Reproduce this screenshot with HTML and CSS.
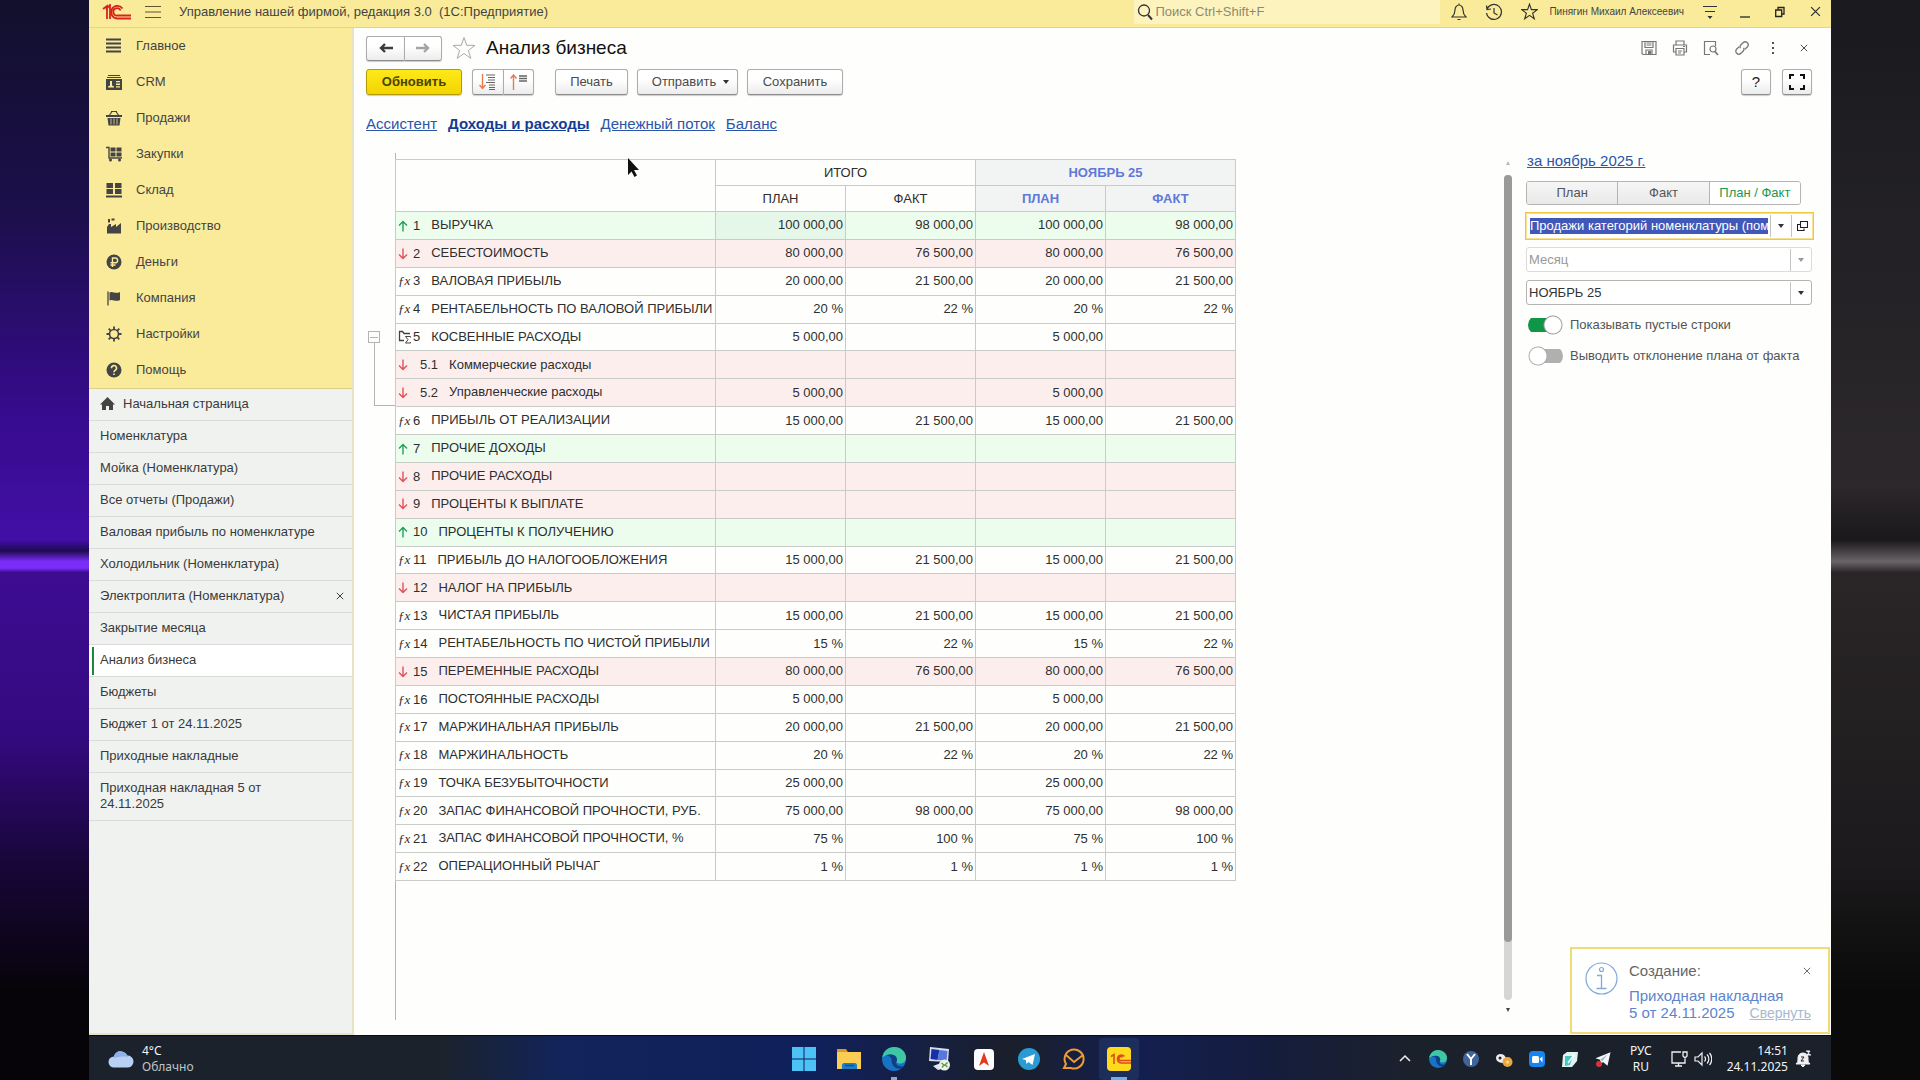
FILE: index.html
```html
<!DOCTYPE html>
<html lang="ru">
<head>
<meta charset="utf-8">
<title>Анализ бизнеса</title>
<link rel="stylesheet" href="styles.css">
</head>
<body>
<svg class="defs" aria-hidden="true">
  <symbol id="up" viewBox="0 0 10 12"><path d="M5 11.500V1.500M1 5.500L5 1.500l4 4" fill="none" stroke="#1fa05a" stroke-width="1.400"/></symbol>
  <symbol id="down" viewBox="0 0 10 12"><path d="M5 .5v10M1 6.500l4 4 4-4" fill="none" stroke="#e0525a" stroke-width="1.400"/></symbol>
  <symbol id="sum" viewBox="0 0 14 14"><path d="M6 10.500H1.500V1.500h3l1.500 2h6" fill="none" stroke="#444" stroke-width="1.300"/><path d="M12.500 7.500V6.500h-5l2.500 3.200L7.500 13h5v-1" fill="none" stroke="#444"/></symbol>
  <symbol id="star" viewBox="0 0 24 24"><path d="M12 1.500l2.700 7.800 8.300.1-6.600 5 2.400 7.900L12 17.500l-6.800 4.800 2.400-7.900-6.600-5 8.300-.1z" fill="none" stroke="currentColor"/></symbol>
  <symbol id="x" viewBox="0 0 10 10"><path d="M1 1l8 8M9 1L1 9" fill="none" stroke="currentColor" stroke-width="1.200"/></symbol>
  <symbol id="edge" viewBox="0 0 24 24"><circle cx="12" cy="12" r="12" fill="#1774c4"/><path d="M.3 10.500C1.500 4 6.500 0 12 0c7 0 12 5 12 10.500 0 4-3 6-6 6-2.500 0-4-1-3.500-2C16 12 14 7.500 9 7.500c-4 0-7 1.500-8.700 3z" fill="#3fc7a5"/><path d="M14.500 14.500C16 12 14 7.500 9 7.500c-2 0-4 .4-5.500 1 4-.5 6 2 6 5 0 5 4 8.500 9.500 8.500 1-.6 2.500-2 3-3-4.500 1.500-9-1-7.500-4.500z" fill="#0f3f86"/></symbol>
  <symbol id="plane" viewBox="0 0 24 24"><path d="M2 11L22 3l-4 18-6-5-3 3-1-6z" fill="#f4f7fb"/><path d="M8 13l10-7-7 9z" fill="#9eb6cc"/></symbol>
</svg>

<div class="window">
  <header class="titlebar">
    <svg class="logo" width="30" height="16" viewBox="0 0 30 16"><path d="M1 5l4-3v13M4 5.500L8 1v14" fill="none" stroke="#d8231c" stroke-width="1.800"/><path d="M20.500 4.500A6.300 6.300 0 1 0 15.500 14.500H29M18.500 6.500A3.700 3.700 0 1 0 15.500 11.500H29" fill="none" stroke="#d8231c" stroke-width="1.800"/></svg>
    <button class="bare menu" aria-label="Меню"><svg width="16" height="14" viewBox="0 0 16 14"><path d="M0 1.500h16M0 7h16M0 12.500h16" stroke="#5c5530" stroke-width="1.200"/></svg></button>
    <span class="apptitle">Управление нашей фирмой, редакция 3.0&nbsp; (1С:Предприятие)</span>
    <label class="search"><svg width="16" height="18" viewBox="0 0 16 18"><circle cx="7" cy="7.500" r="5.500" fill="none" stroke="#333" stroke-width="1.300"/><path d="M11 12l4 4.500" stroke="#333" stroke-width="2"/></svg><input type="search" placeholder="Поиск Ctrl+Shift+F" aria-label="Поиск"></label>
    <div class="titleicons">
      <button class="bare" aria-label="Уведомления"><svg width="16" height="18" viewBox="0 0 16 18"><path d="M1 14h14c-2-2-3-3-3-7 0-3-2-5-4-5S4 4 4 7c0 4-1 5-3 7zM6.500 16.500h3M8 .5V2" fill="none" stroke="#333" stroke-width="1.200"/></svg></button>
      <button class="bare" aria-label="История"><svg width="18" height="18" viewBox="0 0 18 18"><path d="M2 6a7.500 7.500 0 1 1-.5 4M1.500 2.500L2 6.500l4-.5M9 5v5l3.500 2" fill="none" stroke="#333" stroke-width="1.200"/></svg></button>
      <button class="bare" aria-label="Избранное"><svg width="17" height="17"><use href="#star" stroke-width="1.600"/></svg></button>
      <span class="user">Пинягин Михаил Алексеевич</span>
      <button class="bare" aria-label="Сервис"><svg width="16" height="16" viewBox="0 0 16 16"><path d="M1 2.500h14M3 7.500h10" stroke="#333" stroke-width="1.200"/><path d="M5.500 12h5L8 15z" fill="#333"/></svg></button>
      <button class="bare" aria-label="Свернуть"><svg width="12" height="12" viewBox="0 0 12 12"><path d="M1 11h10" stroke="#333" stroke-width="1.400"/></svg></button>
      <button class="bare" aria-label="Восстановить"><svg width="10" height="12" viewBox="0 0 10 12"><path d="M.7 4h6v6.500h-6zM3 4V1.500h6V8H7" fill="none" stroke="#222" stroke-width="1.300"/></svg></button>
      <button class="bare" aria-label="Закрыть"><svg width="11" height="11"><use href="#x"/></svg></button>
    </div>
  </header>

  <div class="body">
    <aside class="sidebar">
      <nav class="sections">
        <a href="#"><svg viewBox="0 0 16 16"><path d="M0 1.500h15M0 5.500h15M0 9.500h15M0 13.500h15" stroke="#444" stroke-width="1.800"/></svg>Главное</a>
        <a href="#"><svg viewBox="0 0 16 16"><path d="M2 1.500h12M1 3.500h14" stroke="#444"/><path fill-rule="evenodd" d="M0 5h16v11H0zM2 12.500v1h6v-1l-2-1V7H4v4.500zM10 7v1.300h4V7zm0 2.600v1.300h4V9.600zm0 2.600v1.300h4v-1.300z" fill="#444"/></svg>CRM</a>
        <a href="#"><svg viewBox="0 0 16 16"><path d="M3 6l3-4.500M13 6l-3-4.500M5 1.500h6" stroke="#444" stroke-width="1.200" fill="none"/><path d="M0 5h16v2H0zM1.500 8h13L13.500 15.500h-11z" fill="#444"/><path d="M5 8.500v6M8 8.500v6M11 8.500v6" stroke="#fbea9a" stroke-width=".7"/></svg>Продажи</a>
        <a href="#"><svg viewBox="0 0 16 16"><path d="M0 1.500h3v10.500h13" fill="none" stroke="#444" stroke-width="1.400"/><path d="M4.500 1.500h5v4h-5zM10.500 1.500h5v4h-5zM4.500 6.500h5v4h-5zM10.500 6.500h5v4h-5z" fill="#444"/><circle cx="4.500" cy="14" r="1.500" fill="#444"/><circle cx="13.500" cy="14" r="1.500" fill="#444"/></svg>Закупки</a>
        <a href="#"><svg viewBox="0 0 16 16"><path d="M.5 1h6.500v5H.5zM9 1h6.500v5H9zM.5 7h6.500v5H.5zM9 7h6.500v5H9zM0 13.500h16V15.500H0z" fill="#444"/></svg>Склад</a>
        <a href="#"><svg viewBox="0 0 16 16"><path d="M1 15.500V9l2-3h2v3l5-3v3l5-4v10.500zM2 1h2v3.500H2zM5.500.5h3v2h-3z" fill="#444"/></svg>Производство</a>
        <a href="#"><svg viewBox="0 0 16 16"><circle cx="8" cy="8" r="7.500" fill="#444"/><path d="M6.500 13V4h2.700a2.300 2.300 0 0 1 0 4.800H4.500M4.500 11h5" fill="none" stroke="#fbea9a" stroke-width="1.400"/></svg>Деньги</a>
        <a href="#"><svg viewBox="0 0 16 16"><path d="M2 1.500V15.500" stroke="#444" stroke-width="1.300"/><path d="M3.500 2.500c3-2 6 2 10.500-.5v8c-4.500 2.500-7.500-1.500-10.500.5z" fill="#444"/></svg>Компания</a>
        <a href="#"><svg viewBox="0 0 16 16"><circle cx="8" cy="8" r="4.500" fill="none" stroke="#444" stroke-width="1.600"/><path d="M8 .5v3M8 12.500v3M.5 8h3M12.500 8h3M2.700 2.700l2.100 2.100M11.200 11.200l2.100 2.100M13.300 2.700l-2.100 2.100M4.800 11.200l-2.100 2.100" stroke="#444" stroke-width="1.800"/></svg>Настройки</a>
        <a href="#"><svg viewBox="0 0 16 16"><circle cx="8" cy="8" r="7.500" fill="#444"/><path d="M5.500 6.200a2.500 2.500 0 1 1 3.800 2c-.9.600-1.300 1-1.300 2M8 11.500v1.500" fill="none" stroke="#fbea9a" stroke-width="1.600"/></svg>Помощь</a>
      </nav>
      <nav class="opened">
        <a href="#"><svg class="home" width="15" height="14" viewBox="0 0 15 14"><path d="M7.500 0L15 7.500h-2V13H9V9H6v4H2V7.500H0z" fill="#444"/></svg>Начальная страница</a>
        <a href="#">Номенклатура</a>
        <a href="#">Мойка (Номенклатура)</a>
        <a href="#">Все отчеты (Продажи)</a>
        <a href="#">Валовая прибыль по номенклатуре</a>
        <a href="#">Холодильник (Номенклатура)</a>
        <a href="#">Электроплита (Номенклатура)<svg class="closetab" width="8" height="8"><use href="#x"/></svg></a>
        <a href="#">Закрытие месяца</a>
        <a href="#" class="current">Анализ бизнеса</a>
        <a href="#">Бюджеты</a>
        <a href="#">Бюджет 1 от 24.11.2025</a>
        <a href="#">Приходные накладные</a>
        <a href="#">Приходная накладная 5 от<br>24.11.2025</a>
      </nav>
    </aside>

    <main class="main">
      <div class="head">
        <div class="pair">
          <button class="btn" aria-label="Назад"><svg width="14" height="10" viewBox="0 0 14 10"><path d="M14 5H3M6 1L2 5l4 4" fill="none" stroke="#3c3c3c" stroke-width="2.400"/></svg></button>
          <button class="btn" aria-label="Вперед"><svg width="14" height="10" viewBox="0 0 14 10"><path d="M0 5h11M8 1l4 4-4 4" fill="none" stroke="#a4a4a4" stroke-width="2.400"/></svg></button>
        </div>
        <svg class="fav" width="24" height="24"><use href="#star"/></svg>
        <h1>Анализ бизнеса</h1>
        <div class="formicons">
          <button class="bare" aria-label="Сохранить"><svg width="16" height="16" viewBox="0 0 16 16"><path d="M1 1.500h14v13H2l-1-1zM4 1.500v6h8v-6M5.500 3h5M5.500 5h5M5 14.500V10h6v4.500" fill="none" stroke="#777" stroke-width="1.200"/><path d="M7 11h3v3H7z" fill="#777"/></svg></button>
          <button class="bare" aria-label="Печать"><svg width="16" height="16" viewBox="0 0 16 16"><path d="M4 5V1h8v4M4 12H1.500V5h13v7H12M4 8.500h8V15H4zM6 11h4M6 13h3M11 6.500h2" fill="none" stroke="#777" stroke-width="1.200"/></svg></button>
          <button class="bare" aria-label="Просмотр"><svg width="16" height="16" viewBox="0 0 16 16"><path d="M7 14.500H1.500v-13h11V6" fill="none" stroke="#777" stroke-width="1.200"/><circle cx="10" cy="9" r="3" fill="none" stroke="#777" stroke-width="1.200"/><path d="M12 11.500l3 3.500" stroke="#777" stroke-width="1.700"/></svg></button>
          <button class="bare" aria-label="Ссылка"><svg width="16" height="16" viewBox="0 0 16 16"><g transform="rotate(-45 8 8)" fill="none" stroke="#777" stroke-width="1.300"><path d="M7 5H3.500a3 3 0 0 0 0 6H6.500a3 3 0 0 0 2.800-2"/><path d="M9 11h3.500a3 3 0 0 0 0-6H9.500a3 3 0 0 0-2.800 2"/></g></svg></button>
          <button class="bare" aria-label="Ещё"><svg width="16" height="14" viewBox="0 0 16 14"><path d="M8 1v2M8 6v2M8 11v2" stroke="#555" stroke-width="2"/></svg></button>
          <button class="bare close" aria-label="Закрыть"><svg width="8" height="8"><use href="#x"/></svg></button>
        </div>
      </div>

      <div class="toolbar">
        <button class="btn primary">Обновить</button>
        <div class="pair icons">
          <button class="btn" aria-label="Развернуть"><svg width="18" height="16" viewBox="0 0 18 16"><path d="M3.500 0v14M.5 11l3 3.500 3-3.500" fill="none" stroke="#e87a50" stroke-width="1.400"/><path d="M7 1h9M9 3.500h7M9 6h7M7 8.500h9M10 11h6M10 13.500h6M10 15.500h6" stroke="#666" stroke-width="1.200"/></svg></button>
          <button class="btn" aria-label="Свернуть"><svg width="18" height="16" viewBox="0 0 18 16"><path d="M3.500 16V1M.5 4.500l3-3.500 3 3.500" fill="none" stroke="#e87a50" stroke-width="1.400"/><path d="M9 2h8M9 4.500h8M9 7h8" stroke="#666" stroke-width="1.300"/></svg></button>
        </div>
        <button class="btn print">Печать</button>
        <button class="btn send">Отправить<i class="caret"></i></button>
        <button class="btn save">Сохранить</button>
        <button class="btn square help" aria-label="Справка">?</button>
        <button class="btn square" aria-label="На весь экран"><svg width="16" height="16" viewBox="0 0 16 16"><path d="M1 5V1h4M11 1h4v4M15 11v4h-4M5 15H1v-4" fill="none" stroke="#111" stroke-width="2"/></svg></button>
      </div>

      <nav class="tabs">
        <a href="#">Ассистент</a>
        <a href="#" class="active">Доходы и расходы</a>
        <a href="#">Денежный поток</a>
        <a href="#">Баланс</a>
      </nav>

      <div class="content">
        <div class="outline"><button class="fold" aria-label="Свернуть группу"></button><div class="bracket"></div></div>
        <div class="sheet">
          <table>
            <colgroup><col class="cname"><col><col><col><col></colgroup>
            <thead>
              <tr><th rowspan="2"></th><th colspan="2">ИТОГО</th><th colspan="2" class="month dark">НОЯБРЬ 25</th></tr>
              <tr><th>ПЛАН</th><th>ФАКТ</th><th class="month dark">ПЛАН</th><th class="month">ФАКТ</th></tr>
            </thead>
            <tbody>
              <tr class="inc"><td><svg><use href="#up"/></svg><b>1</b>ВЫРУЧКА</td><td class="cell">100 000,00</td><td>98 000,00</td><td>100 000,00</td><td>98 000,00</td></tr>
              <tr class="exp"><td><svg><use href="#down"/></svg><b>2</b>СЕБЕСТОИМОСТЬ</td><td>80 000,00</td><td>76 500,00</td><td>80 000,00</td><td>76 500,00</td></tr>
              <tr><td><i>ƒx</i><b>3</b>ВАЛОВАЯ ПРИБЫЛЬ</td><td>20 000,00</td><td>21 500,00</td><td>20 000,00</td><td>21 500,00</td></tr>
              <tr><td><i>ƒx</i><b>4</b>РЕНТАБЕЛЬНОСТЬ ПО ВАЛОВОЙ ПРИБЫЛИ</td><td>20 %</td><td>22 %</td><td>20 %</td><td>22 %</td></tr>
              <tr><td><svg class="sum"><use href="#sum"/></svg><b>5</b>КОСВЕННЫЕ РАСХОДЫ</td><td>5 000,00</td><td></td><td>5 000,00</td><td></td></tr>
              <tr class="exp sub"><td><svg><use href="#down"/></svg><b>5.1</b>Коммерческие расходы</td><td></td><td></td><td></td><td></td></tr>
              <tr class="exp sub"><td><svg><use href="#down"/></svg><b>5.2</b>Управленческие расходы</td><td>5 000,00</td><td></td><td>5 000,00</td><td></td></tr>
              <tr><td><i>ƒx</i><b>6</b>ПРИБЫЛЬ ОТ РЕАЛИЗАЦИИ</td><td>15 000,00</td><td>21 500,00</td><td>15 000,00</td><td>21 500,00</td></tr>
              <tr class="inc"><td><svg><use href="#up"/></svg><b>7</b>ПРОЧИЕ ДОХОДЫ</td><td></td><td></td><td></td><td></td></tr>
              <tr class="exp"><td><svg><use href="#down"/></svg><b>8</b>ПРОЧИЕ РАСХОДЫ</td><td></td><td></td><td></td><td></td></tr>
              <tr class="exp"><td><svg><use href="#down"/></svg><b>9</b>ПРОЦЕНТЫ К ВЫПЛАТЕ</td><td></td><td></td><td></td><td></td></tr>
              <tr class="inc"><td><svg><use href="#up"/></svg><b>10</b>ПРОЦЕНТЫ К ПОЛУЧЕНИЮ</td><td></td><td></td><td></td><td></td></tr>
              <tr><td><i>ƒx</i><b>11</b>ПРИБЫЛЬ ДО НАЛОГООБЛОЖЕНИЯ</td><td>15 000,00</td><td>21 500,00</td><td>15 000,00</td><td>21 500,00</td></tr>
              <tr class="exp"><td><svg><use href="#down"/></svg><b>12</b>НАЛОГ НА ПРИБЫЛЬ</td><td></td><td></td><td></td><td></td></tr>
              <tr><td><i>ƒx</i><b>13</b>ЧИСТАЯ ПРИБЫЛЬ</td><td>15 000,00</td><td>21 500,00</td><td>15 000,00</td><td>21 500,00</td></tr>
              <tr><td><i>ƒx</i><b>14</b>РЕНТАБЕЛЬНОСТЬ ПО ЧИСТОЙ ПРИБЫЛИ</td><td>15 %</td><td>22 %</td><td>15 %</td><td>22 %</td></tr>
              <tr class="exp"><td><svg><use href="#down"/></svg><b>15</b>ПЕРЕМЕННЫЕ РАСХОДЫ</td><td>80 000,00</td><td>76 500,00</td><td>80 000,00</td><td>76 500,00</td></tr>
              <tr><td><i>ƒx</i><b>16</b>ПОСТОЯННЫЕ РАСХОДЫ</td><td>5 000,00</td><td></td><td>5 000,00</td><td></td></tr>
              <tr><td><i>ƒx</i><b>17</b>МАРЖИНАЛЬНАЯ ПРИБЫЛЬ</td><td>20 000,00</td><td>21 500,00</td><td>20 000,00</td><td>21 500,00</td></tr>
              <tr><td><i>ƒx</i><b>18</b>МАРЖИНАЛЬНОСТЬ</td><td>20 %</td><td>22 %</td><td>20 %</td><td>22 %</td></tr>
              <tr><td><i>ƒx</i><b>19</b>ТОЧКА БЕЗУБЫТОЧНОСТИ</td><td>25 000,00</td><td></td><td>25 000,00</td><td></td></tr>
              <tr><td><i>ƒx</i><b>20</b>ЗАПАС ФИНАНСОВОЙ ПРОЧНОСТИ, РУБ.</td><td>75 000,00</td><td>98 000,00</td><td>75 000,00</td><td>98 000,00</td></tr>
              <tr><td><i>ƒx</i><b>21</b>ЗАПАС ФИНАНСОВОЙ ПРОЧНОСТИ, %</td><td>75 %</td><td>100 %</td><td>75 %</td><td>100 %</td></tr>
              <tr><td><i>ƒx</i><b>22</b>ОПЕРАЦИОННЫЙ РЫЧАГ</td><td>1 %</td><td>1 %</td><td>1 %</td><td>1 %</td></tr>
            </tbody>
          </table>
        </div>
        <div class="scroll"><i class="arrow top"></i><div class="track"><div class="thumb"></div></div><i class="arrow"></i></div>
        <section class="panel">
          <a href="#" class="period">за ноябрь 2025 г.</a>
          <div class="segments"><button>План</button><button>Факт</button><button class="on">План / Факт</button></div>
          <div class="combo focus"><input type="text" aria-label="Вариант" value="Продажи категорий номенклатуры (помесячно)"><button aria-label="Выбрать"><i class="caret"></i></button><button aria-label="Открыть"><svg width="11" height="11" viewBox="0 0 11 11"><path d="M3.500 .5h7v6h-7zM3 3.500H.5v6H7V7.500" fill="none" stroke="#222" stroke-width="1.100"/></svg></button></div>
          <div class="combo off"><select disabled aria-label="Периодичность"><option>Месяц</option></select><span class="drop"><i class="caret"></i></span></div>
          <div class="combo"><select aria-label="Период"><option>НОЯБРЬ 25</option></select><span class="drop"><i class="caret"></i></span></div>
          <label class="toggle"><input type="checkbox" checked>Показывать пустые строки</label>
          <label class="toggle"><input type="checkbox">Выводить отклонение плана от факта</label>
        </section>
      </div>
    </main>

    <div class="toast">
      <svg width="33" height="33" viewBox="0 0 33 33"><circle cx="16.500" cy="16.500" r="15.500" fill="none" stroke="#7fa9de" stroke-width="1.200"/><circle cx="16.500" cy="7.500" r="2" fill="none" stroke="#7fa9de" stroke-width="1.200"/><path d="M12 13.500h4.500v13M11.500 26.500h10" fill="none" stroke="#7fa9de" stroke-width="1.300"/></svg>
      <div class="toasttext"><span>Создание:</span><a href="#">Приходная накладная<br>5 от 24.11.2025</a></div>
      <div class="toastside"><button class="bare" aria-label="Закрыть"><svg width="8" height="8"><use href="#x"/></svg></button><a href="#">Свернуть</a></div>
    </div>
    <svg class="cursor" width="12" height="20" viewBox="0 0 12 20"><path d="M1 0v17l3.500-3.500L7.500 19l2.500-1.500-3-5.500H12z" fill="#111"/></svg>
  </div>

  <footer class="taskbar">
    <div class="weather">
      <svg width="26" height="18" viewBox="0 0 26 18"><path d="M6 17.500a5.500 5.500 0 0 1 0-11A7 7 0 0 1 19 5.500a6 6 0 0 1 1 12z" fill="#b9d0f5"/><path d="M6 8a6 6 0 0 1 9-6 7 7 0 0 1 5 5c-5-1-9 0-14 1z" fill="#8fb0e8"/></svg>
      <div><span>4°C</span><span class="dim">Облачно</span></div>
    </div>
    <div class="apps">
      <button aria-label="Пуск"><svg viewBox="0 0 24 24"><path d="M0 0h11.500v11.500H0zM12.500 0H24v11.500H12.500zM0 12.500h11.500V24H0zM12.500 12.500H24V24H12.500z" fill="#4cc2f5"/></svg></button>
      <button aria-label="Проводник"><svg viewBox="0 0 24 24"><path d="M0 2h9l2 3h13v5H0z" fill="#d99a26"/><path d="M0 5h24v17H0z" fill="#fbcd55"/><path d="M5 22v-4c0-1 1-2 2-2h11c1 0 2 1 2 2v4z" fill="#1c7fc4"/><path d="M8 18.500h9" stroke="#0d4f8c" stroke-width="1.500"/></svg></button>
      <button class="idle" aria-label="Edge"><svg><use href="#edge"/></svg></button>
      <button aria-label="Удаленный рабочий стол"><svg viewBox="0 0 24 24"><path d="M3 0l19 2-1 13L2 14z" fill="#d8dcea"/><path d="M4.500 2l8 1-2 10-7-1z" fill="#1630a8"/><path d="M12.500 3l8 1-1 9.500-9-.5z" fill="#5777da"/><path d="M6 19l8-3 4 5-7 2z" fill="#e3e6ee"/><circle cx="17.500" cy="18" r="5.500" fill="#eef0ea"/><path d="M14.500 16l2.500 2-2 2.500M20.500 15.500L18 18l2.500 2" fill="none" stroke="#57a046" stroke-width="1.400"/></svg></button>
      <button aria-label="Клиент"><svg viewBox="0 0 24 24"><rect x="2" y="2" width="20" height="21" rx="4" fill="#fff"/><path d="M12 5l5 14-5-3.500L7 19z" fill="#e8381c"/></svg></button>
      <button aria-label="Telegram"><svg viewBox="0 0 24 24"><circle cx="12" cy="12" r="11" fill="#2a9bd3"/><path d="M5 12l13-5-2.500 11-4-3-2 2-.7-4z" fill="#fff"/></svg></button>
      <button aria-label="Почта"><svg viewBox="0 0 24 24"><path d="M4 17A9.500 9.500 0 1 1 9 21H2zM4 8l8 7 9-7" fill="none" stroke="#ec9b36" stroke-width="2"/></svg></button>
      <button class="running" aria-label="1С"><svg viewBox="0 0 24 24"><rect width="24" height="24" rx="4" fill="#ffd91c"/><path d="M4 9.500l3-2V17M17.500 9.500a4 4 0 1 0-3 6.500H24M15.500 10.500a2 2 0 1 0-1 3H24" fill="none" stroke="#dc4a22" stroke-width="1.600"/></svg></button>
    </div>
    <div class="tray">
      <svg class="t" viewBox="0 0 18 18"><path d="M4 11l5-5 5 5" fill="none" stroke="#eee" stroke-width="1.500"/></svg>
      <svg class="t"><use href="#edge"/></svg>
      <svg class="t" viewBox="0 0 18 18"><circle cx="9" cy="9" r="8" fill="#40659a"/><path d="M5 4l4 5 4-5M9 9v6" fill="none" stroke="#fff" stroke-width="2"/></svg>
      <svg class="t" viewBox="0 0 18 18"><path d="M1 8c0-4 5-5 8-3l3 4-4 4c-2 0-7-1-7-5z" fill="#eee"/><circle cx="12.500" cy="12" r="5" fill="#eca73c"/><circle cx="12.500" cy="12" r="1.500" fill="#f8dca0"/><circle cx="5" cy="8" r="1.500" fill="#222"/></svg>
      <svg class="t" viewBox="0 0 18 18"><rect x="1" y="1" width="16" height="16" rx="4" fill="#1685f2"/><rect x="4" y="6" width="7" height="7" rx="1.500" fill="#fff"/><path d="M11.500 9L14.500 6.500v6z" fill="#fff"/></svg>
      <svg class="t" viewBox="0 0 18 18"><path d="M2 5l4-3h11l-1 9-5 6H1z" fill="#dff5f0"/><path d="M4 6h8l-3 9-5 1z" fill="#48c6c0"/><path d="M7 13l6-8" stroke="#fff" stroke-width="1.500"/></svg>
      <svg class="t" viewBox="0 0 18 18"><use href="#plane"/><circle cx="5" cy="14" r="3" fill="#d6323a"/></svg>
      <div class="lang"><span>РУС</span><span>RU</span></div>
      <svg class="t" viewBox="0 0 18 18"><path d="M11 2H2v11h13V9M5 16h7M8.500 13v3M13 2h4v4l-2 2-2-2z" fill="none" stroke="#f0f0f0" stroke-width="1.300"/></svg>
      <svg class="t vol" viewBox="0 0 18 18"><path d="M1 7v4h3l4 4V3L4 7zM10.500 6.500c1.300 1.500 1.300 3.500 0 5M13 4.500c2.500 2.500 2.500 6.500 0 9M15.500 3c3 3.500 3 8.500 0 12" fill="none" stroke="#f0f0f0" stroke-width="1.200"/></svg>
      <div class="clock"><span>14:51</span><span>24.11.2025</span></div>
      <svg class="t" viewBox="0 0 18 18"><path d="M2 14c2-2 2-3 2-6 0-3 2-5 5-5s5 2 5 5c0 3 0 4 2 6zM7 15h4l-2 2zM12 1h4l-3 4h4" fill="#f0f0f0" stroke="#f0f0f0"/><path d="M7 7h3l-3 4h3" fill="none" stroke="#1b212b"/></svg>
    </div>
  </footer>
</div>
</body>
</html>
```
FILE: styles.css
```css
* { box-sizing: border-box; }
body {
  margin: 0;
  padding: 0 89px;
  min-height: 100vh;
  font: 13px/16px "Liberation Sans", Arial, sans-serif;
  color: #333;
  background:
    linear-gradient(#12102c 0%, #1c0f4c 20%, #360b8c 38%, #420fa6 50%, #1d0a50 51%, #7a2df8 52%, #7a2df8 52.6%, #3d0c92 53%, #340a80 68%, #180638 80%, #060408 92%) left / 89px 100% no-repeat,
    linear-gradient(#1a1a1e 0%, #2c282c 45%, #1a181a 50%, #6a6468 52%, #2a2628 53%, #1c1a1c 80%, #0a0a0a 92%) right / 89px 100% no-repeat #0a0a10;
}
button, input, select { font: inherit; color: inherit; margin: 0; }
h1 { margin: 0; font-weight: 400; }
.defs { display: none; }
.bare { border: 0; background: none; padding: 0; display: flex; align-items: center; justify-content: center; }

.window { min-height: 100vh; display: flex; flex-direction: column; background: #fefefc; }
.titlebar { height: 28px; display: flex; align-items: center; background: #faeb9b; border-bottom: 1px solid #e3d58c; padding: 0 5px 4px 13px; color: #444; }
.menu { margin: 0 18px 0 13px; }
.apptitle { margin: 0 auto 0 0; white-space: nowrap; }
.search { display: flex; align-items: center; width: 306px; height: 24px; background: #fdf3bf; padding-left: 3px; gap: 2px; margin-right: 8px; }
.search input { border: 0; background: none; flex: 1; padding: 0; outline: 0; }
.search input::placeholder { color: #8e8a70; opacity: 1; }
.titleicons { display: flex; align-items: center; gap: 13px; }
.titleicons .bare { width: 22px; color: #333; }
.user { font-size: 10px; white-space: nowrap; margin: 0 2px 0 -4px; }

.body { flex: 1; display: flex; position: relative; }
.sidebar { width: 265px; display: flex; flex-direction: column; background: #f0f2f0; border-right: 2px solid #e6e4c4; border-bottom: 2px solid #e6e4c4; }
.sections { background: #faeb9b; border-bottom: 1px solid #dccf8c; }
.sections a { display: flex; align-items: center; height: 36px; gap: 14px; padding-left: 17px; color: #444; text-decoration: none; }
.sections svg { width: 16px; height: 16px; }
.opened a { display: flex; align-items: center; min-height: 32px; padding: 7px 8px 8px 11px; border-bottom: 1px solid #dadcda; color: #3a3a3a; text-decoration: none; }
.opened .current { background: linear-gradient(#1b8a3c, #1b8a3c) 3px center / 2px 28px no-repeat #fff; }
.home { margin-right: 8px; }
.closetab { margin-left: auto; }

.main { flex: 1; display: flex; flex-direction: column; padding: 8px 17px 15px 12px; background: #fefefc; }
.head { display: flex; align-items: center; height: 24px; }
.head h1 { font-size: 19px; line-height: 24px; color: #111; margin-left: 10px; }
.fav { margin-left: 10px; color: #aaa; }
.formicons { margin: 0 2px 0 auto; display: flex; gap: 15px; }
.formicons .bare { width: 16px; }
.formicons .close { color: #444; }
.btn { display: flex; align-items: center; justify-content: center; height: 26px; border: 1px solid #adadad; border-bottom-color: #8c8c8c; border-radius: 3px; background: linear-gradient(#fff 40%, #ececec); color: #4a4a4a; padding: 0; box-shadow: 0 1px 1px #ccc; }
.pair { display: flex; }
.pair .btn { width: 38px; height: 25px; }
.pair .btn:first-child { border-radius: 3px 0 0 3px; border-right: 0; }
.pair .btn:last-child { border-radius: 0 3px 3px 0; }
.pair.icons { margin: 0 21px 0 10px; }
.pair.icons .btn { width: 31px; height: 26px; }
.toolbar { display: flex; margin-top: 9px; padding-right: 2px; }
.primary { width: 96px; font-weight: 700; background: linear-gradient(#ffe91a, #f2d400); border-color: #b39c00; color: #4a4300; }
.print { width: 73px; }
.send { width: 101px; margin: 0 9px; gap: 7px; padding-left: 6px; }
.save { width: 96px; }
.square { width: 30px; color: #222; }
.help { margin: 0 11px 0 auto; font-size: 15px; }
.caret { width: 0; height: 0; border: 3px solid transparent; border-top: 4px solid #333; border-bottom: 0; }
.tabs { display: flex; gap: 11px; margin-top: 20px; height: 18px; font-size: 15px; line-height: 18px; }
.tabs a, .period { color: #2a55a8; }
.tabs .active { font-weight: 700; color: #143c94; }

.content { flex: 1; display: flex; margin-top: 20px; }
.outline { width: 29px; padding: 178px 0 0 2px; }
.fold { display: block; width: 12px; height: 12px; border: 1px solid #b4b4b4; padding: 0; background: linear-gradient(#b4b4b4, #b4b4b4) center / 8px 1px no-repeat; }
.bracket { margin-left: 6px; height: 63px; border: solid #b4b4b4; border-width: 0 0 1px 1px; }
.sheet { flex: 1; border-left: 1px solid #b4b4b4; padding-top: 6px; }
table { border-collapse: collapse; table-layout: fixed; width: 840px; height: 722px; margin-left: -1px; color: #2e2e2e; }
col { width: 130px; }
.cname { width: 320px; }
th, td { border: 1px solid #c8ccc8; padding: 0 2px; height: 27px; }
th { height: 26px; font-weight: 400; }
td { text-align: right; white-space: nowrap; }
td:first-child { text-align: left; }
td:nth-child(4), th.dark { border-left-color: #8c8c8c; }
.month { color: #6078d8; font-weight: 700; background: #f2f4f4; }
.inc { background: #ecfdee; }
.exp { background: #fdeeee; }
.cell { background: #e4f7e8; }
td svg, td i, td b { display: inline-block; vertical-align: middle; }
td svg { width: 10px; height: 12px; margin-right: 5px; }
td .sum { width: 14px; height: 14px; margin-right: 1px; }
td i { font: italic 13px/16px "Liberation Serif", serif; width: 15px; }
td b { font-weight: 400; min-width: 7px; margin-right: 11px; }
.sub b { margin-left: 7px; }

.scroll { width: 8px; margin: 8px 13px 8px 0; display: flex; flex-direction: column; align-items: center; }
.track { width: 8px; flex: 1; margin: 10px 0 8px; border-radius: 4px; background: #d6d6d4; }
.thumb { height: 93%; border-radius: 4px; background: #9a9a98; }
.arrow { width: 0; height: 0; border: 2px solid transparent; border-top: 4px solid #444; border-bottom: 0; }
.arrow.top { border: 2px solid transparent; border-bottom: 4px solid #bbb; border-top: 0; }

.panel { width: 289px; display: flex; flex-direction: column; align-items: flex-start; }
.period { margin-left: 2px; font-size: 15px; }
.segments { display: flex; width: 275px; margin: 12px 0 7px 1px; border: 1px solid #b4b4b4; border-radius: 3px; overflow: hidden; }
.segments button { flex: 1; height: 22px; border: 0; border-right: 1px solid #b4b4b4; background: linear-gradient(#f6f6f6, #e9e9e9); padding: 0; color: #555; }
.segments .on { border: 0; background: #fff; color: #1a9850; }
.combo { display: flex; align-items: center; width: 286px; height: 25px; margin: 0 0 8px 1px; border: 1px solid #b4b4b4; border-radius: 3px; background: #fff; }
.combo select { flex: 1; min-width: 0; appearance: none; border: 0; background: none; padding: 0 2px; opacity: 1; color: #333; }
.combo .drop, .combo button { width: 21px; height: 22px; border: 0; border-left: 1px solid #c4c4c4; background: none; display: flex; align-items: center; justify-content: center; padding: 0; }
.combo.off { border-color: #dcdcdc; }
.combo.off select { color: #999; }
.combo.off .caret { border-top-color: #999; }
.combo.focus { width: 289px; height: 28px; margin: 0 0 7px; border: 1px solid #f0c840; border-radius: 0; outline: 1px solid #f8e090; outline-offset: -2px; padding: 0 1px 0 4px; }
.combo.focus input { flex: 1; min-width: 0; height: 16px; border: 0; padding: 0; margin-right: 2px; background: #4058b8; color: #fff; }
.toggle { display: flex; align-items: center; gap: 7px; height: 20px; margin: 2px 0 9px 3px; white-space: nowrap; color: #555; }
.toggle input { appearance: none; width: 35px; height: 20px; border-radius: 10px; background: radial-gradient(circle at 10px 10px, #fff 8px, #aaa 9px, transparent 10px), linear-gradient(#b0b0b0, #b0b0b0) right 3px / 28px 14px no-repeat; }
.toggle input:checked { background: radial-gradient(circle at 25px 10px, #fff 8px, #999 9px, transparent 10px), linear-gradient(#0f9646, #0f9646) left 3px / 28px 14px no-repeat; }

.toast { position: absolute; right: 1px; bottom: 1px; width: 260px; height: 87px; display: flex; padding: 13px 17px 0 13px; border: 2px solid #f3da78; background: #fff; }
.toasttext { display: flex; flex-direction: column; margin-left: 11px; font-size: 15px; line-height: 18px; gap: 7px; white-space: nowrap; color: #666; }
.toasttext a { color: #5c84cc; text-decoration: none; line-height: 17px; }
.toastside { flex: 1; width: 0; display: flex; flex-direction: column; align-items: flex-end; justify-content: space-between; padding: 5px 0 11px; font-size: 14px; }
.toastside .bare { color: #666; }
.toastside a { color: #a8b8d0; }
.cursor { position: absolute; left: 538px; top: 130px; }

.taskbar { height: 45px; display: grid; grid-template-columns: 1fr auto 1fr; align-items: center; padding: 2px 19px 0; border-top: 1px solid #0a0c10; color: #f4f4f4; font: 12px/16px "Noto Sans", "Open Sans", sans-serif; background: linear-gradient(90deg, #1b222b 0%, #1b222b 20%, #12245a 27%, #10205a 42%, #1a1f2b 53%, #131f50 60%, #151d3c 68%, #1b212b 76%); }
.taskbar span { display: block; }
.weather { display: flex; align-items: center; gap: 8px; }
.dim { color: #c0c4ca; }
.apps { display: flex; gap: 5px; padding-left: 2px; }
.apps button { width: 40px; height: 42px; border: 0; padding: 0; background: none; display: flex; align-items: center; justify-content: center; }
.apps svg { width: 24px; height: 24px; }
.apps .idle { background: linear-gradient(#9aa4c0, #9aa4c0) bottom / 6px 3px no-repeat; }
.apps .running { background: linear-gradient(#62b4f0, #62b4f0) bottom / 16px 3px no-repeat, #1d2d5c; border-radius: 4px; }
.tray { display: flex; align-items: center; justify-content: flex-end; gap: 15px; }
.t { width: 18px; height: 18px; }
.tray .vol { margin-left: -9px; }
.lang { text-align: center; margin: 0 3px; }
.clock { text-align: right; }
.clock + .t { margin-left: -9px; }
```
